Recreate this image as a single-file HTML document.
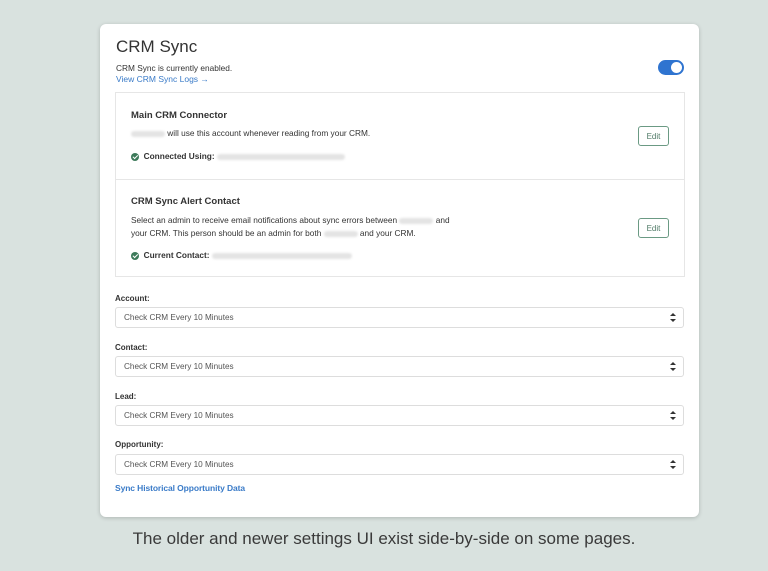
<!DOCTYPE html>
<html><head><style>
*{box-sizing:border-box;margin:0;padding:0}
body{width:768px;height:571px;background:#d9e2df;font-family:"Liberation Sans",sans-serif;position:relative;overflow:hidden;color:#333}
.card{position:absolute;left:100px;top:24px;width:599px;height:493px;background:#fff;border-radius:6px;box-shadow:0 1px 4px rgba(0,0,0,.2)}
.abs{position:absolute}
h1{position:absolute;left:16px;top:13px;font-size:17px;font-weight:normal;color:#333}
.s{font-size:8.3px;color:#333}
.link{font-size:8.5px;color:#3a7bc8}
.toggle{position:absolute;left:558px;top:36px;width:26px;height:15px;border-radius:8px;background:#2f74d0}
.toggle:after{content:"";position:absolute;right:2px;top:2px;width:11px;height:11px;border-radius:50%;background:#fff}
.box{position:absolute;left:15px;top:68px;width:570px;height:185px;border:1px solid #e6e6e6}
.div{position:absolute;left:0;top:86px;width:568px;border-top:1px solid #e6e6e6}
.t{font-size:9.5px;font-weight:bold;color:#333}
.blur{display:inline-block;background:#e4e4e4;height:6px;border-radius:3px;vertical-align:middle;filter:blur(1px)}
.check{display:inline-block;width:8px;height:8px;border-radius:50%;background:#3d7a5a;vertical-align:middle;position:relative}
.check:after{content:"";position:absolute;left:2.5px;top:1.5px;width:2px;height:3.5px;border:solid #fff;border-width:0 1px 1px 0;transform:rotate(45deg)}
.edit{position:absolute;width:31px;height:20px;border:1px solid #6b9a84;border-radius:3px;font-size:8px;color:#4f7a66;display:flex;align-items:center;justify-content:center}
.lbl{position:absolute;left:15px;font-size:8px;font-weight:bold;color:#333}
.sel{position:absolute;left:15px;width:569px;height:21px;border:1px solid #ddd;border-radius:3px;font-size:8.2px;color:#555;padding-left:8px;line-height:19px}
.sel:after{content:"";position:absolute;right:7px;top:5px;width:0;height:0;border:3px solid transparent;border-bottom:3.5px solid #333;border-top:0}
.sel:before{content:"";position:absolute;right:7px;top:10.5px;width:0;height:0;border:3px solid transparent;border-top:3.5px solid #333;border-bottom:0}
.cap{position:absolute;left:0;width:768px;text-align:center;font-size:17px;color:#3a3a3a}
</style></head><body>
<div class="card">
<h1>CRM Sync</h1>
<div class="abs s" style="left:16px;top:39px">CRM Sync is currently enabled.</div>
<div class="abs link" style="left:16px;top:50px">View CRM Sync Logs →</div>
<div class="toggle"></div>
<div class="box">
 <div class="abs t" style="left:15px;top:17px">Main CRM Connector</div>
 <div class="abs s" style="left:15px;top:35px"><span class="blur" style="width:34px"></span> will use this account whenever reading from your CRM.</div>
 <div class="abs s" style="left:15px;top:58px"><span class="check"></span> &nbsp;<b>Connected Using:</b> <span class="blur" style="width:128px"></span></div>
 <div class="edit" style="left:522px;top:33px">Edit</div>
 <div class="div"></div>
 <div class="abs t" style="left:15px;top:103px">CRM Sync Alert Contact</div>
 <div class="abs s" style="left:15px;top:121px;line-height:13px;width:333px">Select an admin to receive email notifications about sync errors between <span class="blur" style="width:34px"></span> and your CRM. This person should be an admin for both <span class="blur" style="width:34px"></span> and your CRM.</div>
 <div class="abs s" style="left:15px;top:157px"><span class="check"></span> &nbsp;<b>Current Contact:</b> <span class="blur" style="width:140px"></span></div>
 <div class="edit" style="left:522px;top:125px">Edit</div>
</div>
<div class="lbl" style="top:270px">Account:</div>
<div class="sel" style="top:283px">Check CRM Every 10 Minutes</div>
<div class="lbl" style="top:319px">Contact:</div>
<div class="sel" style="top:332px">Check CRM Every 10 Minutes</div>
<div class="lbl" style="top:368px">Lead:</div>
<div class="sel" style="top:381px">Check CRM Every 10 Minutes</div>
<div class="lbl" style="top:416px">Opportunity:</div>
<div class="sel" style="top:430px">Check CRM Every 10 Minutes</div>
<div class="abs link" style="left:15px;top:459px;font-weight:bold;letter-spacing:-0.1px">Sync Historical Opportunity Data</div>
</div>
<div class="cap" style="top:529px">The older and newer settings UI exist side-by-side on some pages.</div>
</body></html>
